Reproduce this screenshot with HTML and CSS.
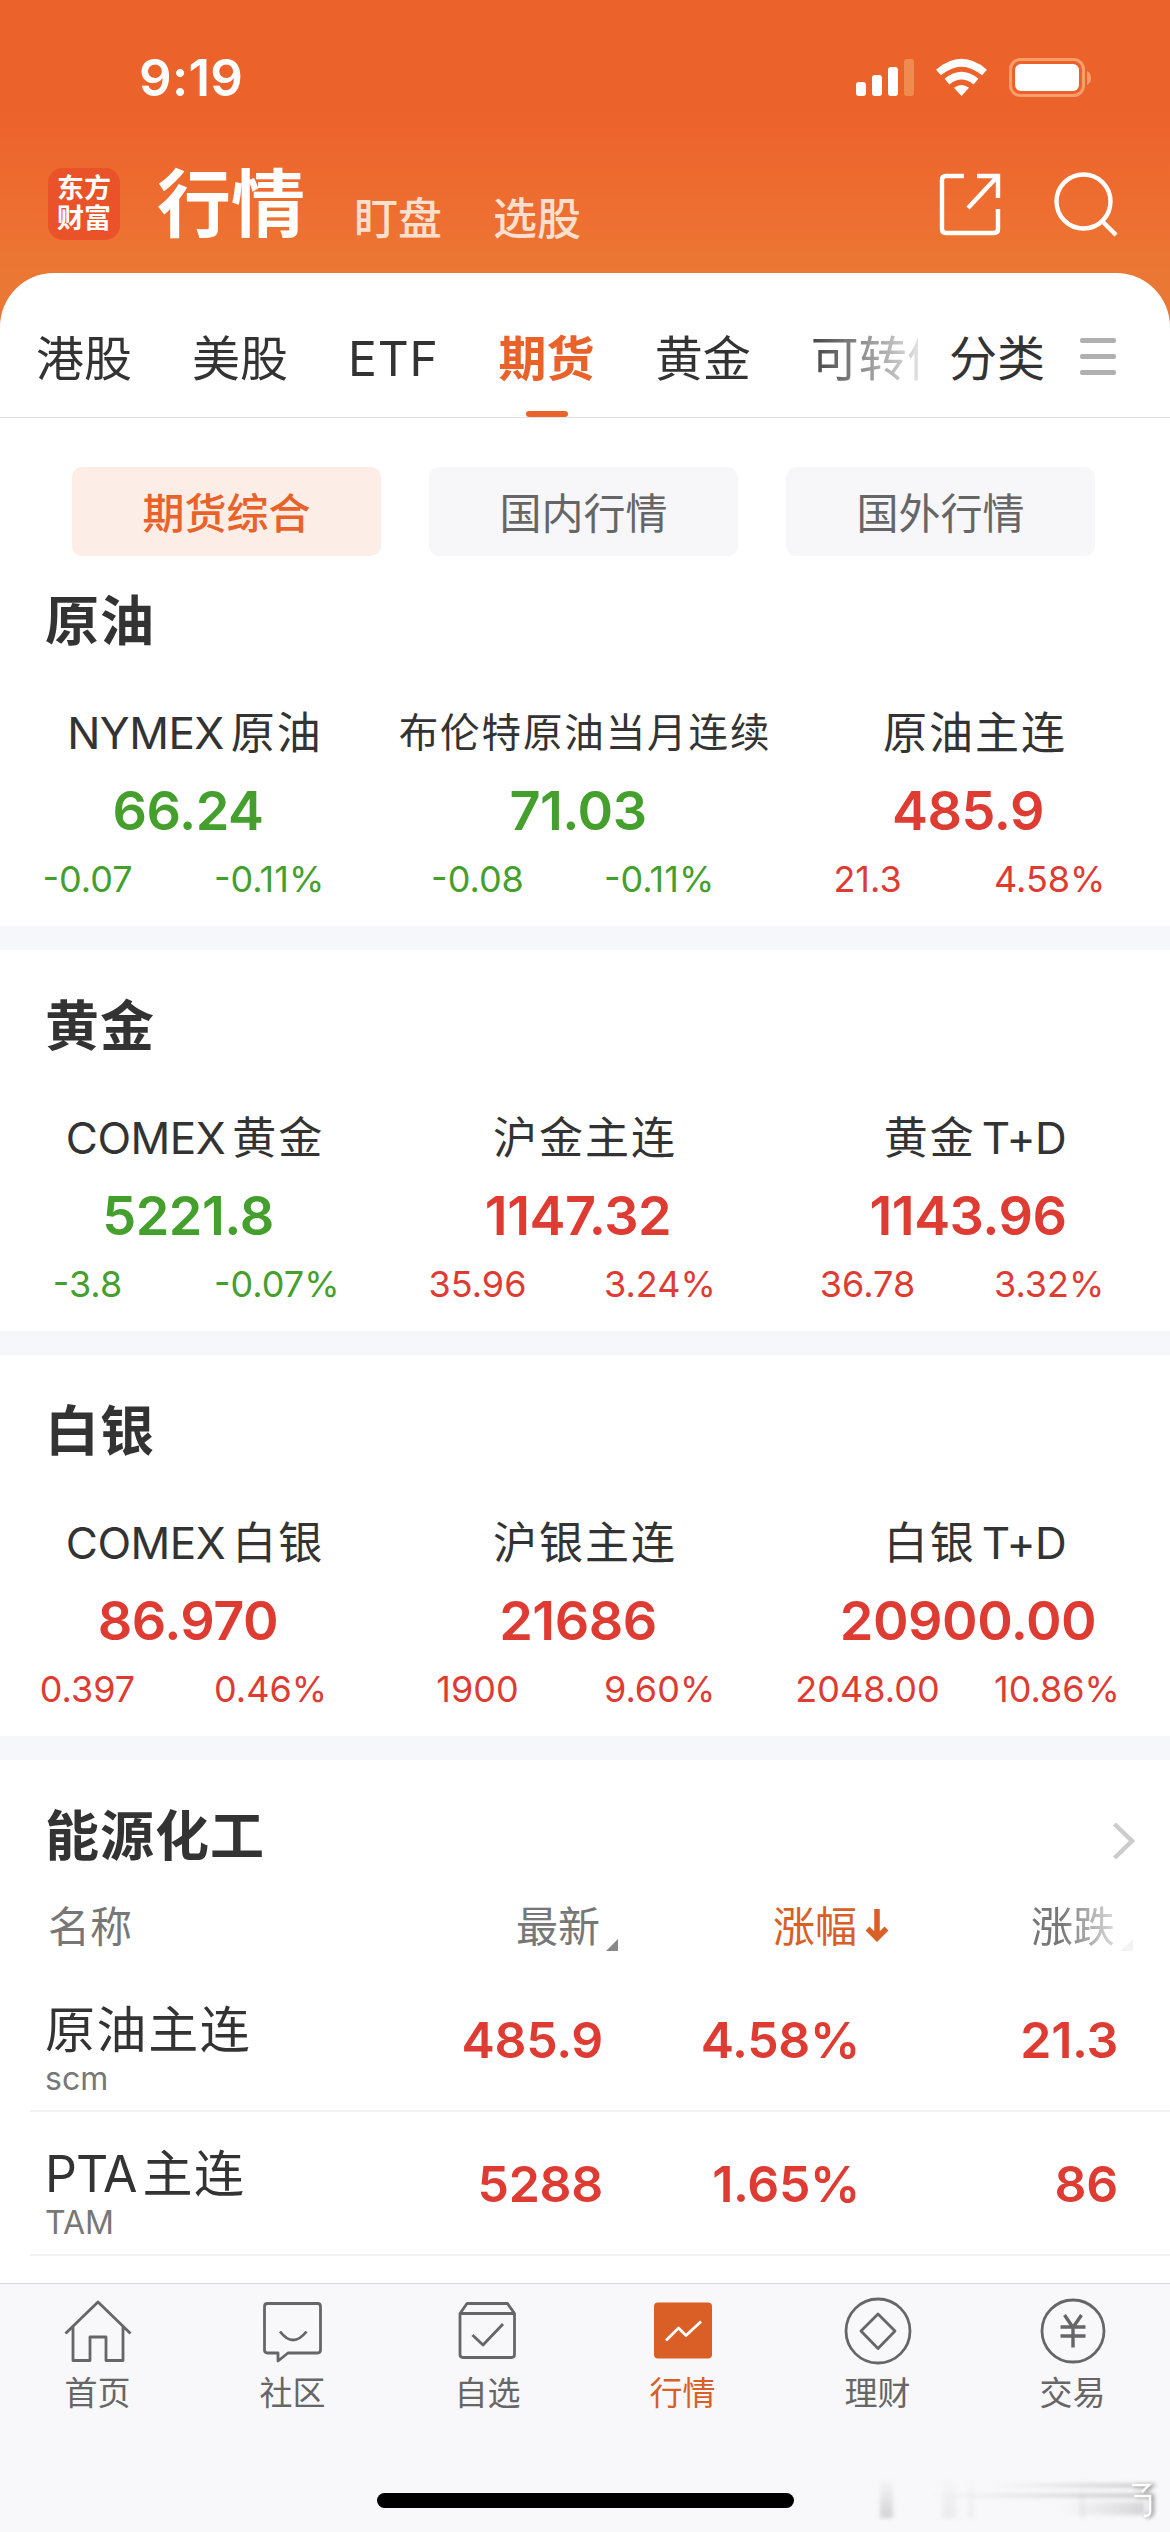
FILE: index.html
```html
<!DOCTYPE html>
<html lang="zh-CN">
<head>
    <meta charset="UTF-8">
    <meta name="viewport" content="width=device-width, initial-scale=1.0">
    <title>行情</title>
    <link rel="stylesheet" href="styles.css">
</head>
<body>
    <div class="app">
        <div class="status-bar">
            <span class="time">9:19</span>
            <svg class="status-icons" width="238" height="42" viewBox="0 0 238 42">
                <g fill="#fff">
                    <rect x="0" y="25" width="10" height="14" rx="3"/>
                    <rect x="16" y="18" width="10" height="21" rx="3"/>
                    <rect x="32" y="10" width="10" height="29" rx="3"/>
                    <rect x="48" y="2" width="10" height="37" rx="3" fill="#f08a4e"/>
                    <path d="M105.500 39l-7.500-8.200q7.500-5.600 15 0z"/>
                    <rect x="159" y="7" width="64" height="27" rx="6"/>
                </g>
                <g fill="none" stroke="#fff" stroke-width="7.500">
                    <path d="M82.500 15.500q23-19.500 46 0"/>
                    <path d="M91 24.700q14.500-12 29 0"/>
                </g>
                <rect x="154.500" y="2.500" width="73" height="36" rx="10" fill="none" stroke="#fb9e6c" stroke-width="3"/>
                <path d="M231 14q4 2 4 7t-4 7z" fill="#fb9e6c"/>
            </svg>
        </div>

        <div class="header">
            <div class="logo">东方<br>财富</div>
            <h1>行情</h1>
            <a class="head-link">盯盘</a>
            <a class="head-link">选股</a>
            <svg class="share" width="62" height="64" viewBox="0 0 62 64" fill="none" stroke="#fff" stroke-width="4.400">
                <path d="M25 4H7q-4 0-4 4v49q0 4 4 4h48q4 0 4-4V37"/>
                <path d="M38 4h21v22M58 5L29 36"/>
            </svg>
            <svg class="search" width="64" height="66" viewBox="0 0 64 66" fill="none" stroke="#fff" stroke-width="4.400">
                <circle cx="29.500" cy="30.500" r="27"/>
                <path d="M48 50l14 14"/>
            </svg>
        </div>

        <div class="sheet">
            <div class="tabs">
                <div class="tabs-scroll">
                    <a>港股</a>
                    <a>美股</a>
                    <a class="latin">ETF</a>
                    <a class="active">期货</a>
                    <a>黄金</a>
                    <a>可转债</a>
                </div>
                <a class="category">分类</a>
                <div class="menu"><i></i><i></i><i></i></div>
            </div>

            <div class="filters">
                <button class="active">期货综合</button>
                <button>国内行情</button>
                <button>国外行情</button>
            </div>

            <div class="group first">
                <h2>原油</h2>
                <div class="quotes">
                    <div class="quote down">
                        <div class="name"><span>NYMEX</span>原油</div>
                        <div class="price">66.24</div>
                        <div class="change"><span>-0.07</span><span>-0.11%</span></div>
                    </div>
                    <div class="quote down">
                        <div class="name small">布伦特原油当月连续</div>
                        <div class="price">71.03</div>
                        <div class="change"><span>-0.08</span><span>-0.11%</span></div>
                    </div>
                    <div class="quote up">
                        <div class="name">原油主连</div>
                        <div class="price">485.9</div>
                        <div class="change"><span>21.3</span><span>4.58%</span></div>
                    </div>
                </div>
            </div>

            <div class="group">
                <h2>黄金</h2>
                <div class="quotes">
                    <div class="quote down">
                        <div class="name"><span>COMEX</span>黄金</div>
                        <div class="price">5221.8</div>
                        <div class="change"><span>-3.8</span><span>-0.07%</span></div>
                    </div>
                    <div class="quote up">
                        <div class="name">沪金主连</div>
                        <div class="price">1147.32</div>
                        <div class="change"><span>35.96</span><span>3.24%</span></div>
                    </div>
                    <div class="quote up">
                        <div class="name">黄金<span class="after">T+D</span></div>
                        <div class="price">1143.96</div>
                        <div class="change"><span>36.78</span><span>3.32%</span></div>
                    </div>
                </div>
            </div>

            <div class="group">
                <h2>白银</h2>
                <div class="quotes">
                    <div class="quote up">
                        <div class="name"><span>COMEX</span>白银</div>
                        <div class="price">86.970</div>
                        <div class="change"><span>0.397</span><span>0.46%</span></div>
                    </div>
                    <div class="quote up">
                        <div class="name">沪银主连</div>
                        <div class="price">21686</div>
                        <div class="change"><span>1900</span><span>9.60%</span></div>
                    </div>
                    <div class="quote up">
                        <div class="name">白银<span class="after">T+D</span></div>
                        <div class="price">20900.00</div>
                        <div class="change"><span>2048.00</span><span>10.86%</span></div>
                    </div>
                </div>
            </div>

            <div class="board">
                <div class="board-title">
                    <h2>能源化工</h2>
                    <svg width="24" height="40" viewBox="0 0 24 40" fill="none" stroke="#ccc" stroke-width="4.500">
                        <path d="M2.500 3L20 20 2.500 37"/>
                    </svg>
                </div>
                <div class="row board-head">
                    <span>名称</span>
                    <span class="sort">最新<i class="corner"></i></span>
                    <span class="sort active">涨幅<svg width="24" height="34" viewBox="0 0 24 34" fill="none" stroke="#d95f26" stroke-width="5.500">
                        <path d="M12 1v29M2.500 20.500L12 30l9.500-9.500"/>
                    </svg></span>
                    <span class="sort fade">涨跌<i class="corner"></i></span>
                </div>
                <div class="row item">
                    <div class="item-name">原油主连<small>scm</small></div>
                    <b>485.9</b>
                    <b>4.58%</b>
                    <b>21.3</b>
                </div>
                <div class="row item">
                    <div class="item-name"><span>PTA</span>主连<small>TAM</small></div>
                    <b>5288</b>
                    <b>1.65%</b>
                    <b>86</b>
                </div>
            </div>
        </div>

        <div class="tab-bar">
            <a>
                <svg width="72" height="72" viewBox="0 0 72 72">
                    <path d="M3.500 37.500L36 6l32.500 31.500M11 31v33.500h17V41h16v23.500h17V31"/>
                </svg>
                首页
            </a>
            <a>
                <svg width="72" height="72" viewBox="0 0 72 72">
                    <path d="M10.500 7.500h50q3 0 3 3v43.500q0 3-3 3H31l-10 8v-8h-10.500q-3 0-3-3V10.500q0-3 3-3zM23 35.500q13 17 26.500 0"/>
                </svg>
                社区
            </a>
            <a>
                <svg width="72" height="72" viewBox="0 0 72 72">
                    <path d="M8 17.500l7-10h40.500l7 10V58.500q0 3-3 3H11q-3 0-3-3zM8 17.500h54.500M20.500 39l10.500 10 20-21"/>
                </svg>
                自选
            </a>
            <a class="active">
                <svg width="72" height="72" viewBox="0 0 72 72">
                    <rect x="7" y="6.500" width="58" height="56" rx="4" fill="#d95f26" stroke="none"/>
                    <path d="M19 44.500L31.500 32l7.500 7.500L54 25.500" stroke="#fff"/>
                </svg>
                行情
            </a>
            <a>
                <svg width="72" height="72" viewBox="0 0 72 72">
                    <circle cx="36" cy="35" r="32"/>
                    <path d="M36 18L53 35 36 52.500 19 35z"/>
                </svg>
                理财
            </a>
            <a>
                <svg width="72" height="72" viewBox="0 0 72 72">
                    <circle cx="36" cy="35" r="31"/>
                    <path d="M27.500 19L36 31.500 44.500 19M23.500 31h25M23.500 40h25M36 31v20.500" stroke-width="3.400"/>
                </svg>
                交易
            </a>
        </div>
        <div class="home-indicator"></div>
        <svg class="smudge" width="290" height="52" viewBox="0 0 290 52">
            <defs>
                <linearGradient id="fadeIn">
                    <stop offset="0" stop-color="#999" stop-opacity="0"/>
                    <stop offset="1" stop-color="#777" stop-opacity="0.55"/>
                </linearGradient>
                <linearGradient id="fadeDown" x2="0" y2="1">
                    <stop offset="0" stop-color="#999" stop-opacity="0"/>
                    <stop offset="1" stop-color="#999" stop-opacity="0.4"/>
                </linearGradient>
                <filter id="soft"><feGaussianBlur stdDeviation="2"/></filter>
            </defs>
            <g filter="url(#soft)">
                <rect x="10" y="4" width="13" height="40" fill="url(#fadeDown)"/>
                <rect x="72" y="4" width="14" height="40" fill="url(#fadeDown)" opacity="0.35"/>
                <rect x="98" y="4" width="6" height="40" fill="url(#fadeDown)" opacity="0.3"/>
                <rect x="210" y="4" width="5" height="40" fill="url(#fadeDown)" opacity="0.4"/>
                <rect x="120" y="10" width="155" height="3" fill="url(#fadeIn)"/>
                <rect x="60" y="20" width="210" height="3" fill="url(#fadeIn)"/>
                <rect x="190" y="28" width="85" height="13" fill="url(#fadeIn)" opacity="0.5"/>
                <path d="M264 12h17l-7 6M266 22h16v16q0 4-6 4" fill="none" stroke="#999" stroke-width="4"/>
            </g>
            <path d="M262 11h17l-7 7M264 22h16v16q0 4-6 4" fill="none" stroke="#fff" stroke-width="2.500"/>
        </svg>
    </div>
</body>
</html>
```

FILE: styles.css
```css
* {
    box-sizing: border-box;
}
body {
    margin: 0;
    background-color: #fff;
    color: #333;
    font-family: Inter, "Noto Sans CJK SC", sans-serif;
}
h1, h2 {
    margin: 0;
}
.app {
    position: relative;
    width: 1170px;
    height: 2532px;
    display: flex;
    flex-direction: column;
    overflow: hidden;
    background: linear-gradient(#ec622b 0, #ec622b 110px, #ee6e31 210px, #ea7733 273px) no-repeat;
    background-size: 100% 340px;
}

/* Status bar */
.status-bar {
    height: 132px;
    padding: 57px 76px 0 139px;
    display: flex;
    justify-content: space-between;
    color: #fff;
}
.time {
    font-size: 51px;
    font-weight: 600;
    line-height: 42px;
    letter-spacing: 0.3px;
}

/* Header */
.header {
    height: 141px;
    padding: 36px 52px 0 48px;
    display: flex;
    align-items: flex-start;
    color: #fff;
}
.logo {
    width: 72px;
    height: 72px;
    padding-top: 6px;
    border-radius: 15px;
    background-color: #ea5229;
    font-size: 27px;
    font-weight: 700;
    line-height: 30px;
    text-align: center;
}
.header h1 {
    margin-left: 37px;
    font-size: 74px;
    font-weight: 700;
    line-height: 72px;
}
.head-link {
    margin: 24px 0 0 51px;
    font-size: 44px;
    font-weight: 500;
    line-height: 54px;
    color: #fddfce;
}
.head-link:nth-of-type(1) {
    margin-left: 49px;
}
.share {
    margin: 4px 0 0 auto;
}
.search {
    margin: 3px 0 0 53px;
}

/* Content sheet */
.sheet {
    flex: 1;
    border-radius: 54px 54px 0 0;
    background-color: #fff;
    overflow: hidden;
}
.tabs {
    height: 145px;
    display: flex;
    border-bottom: 1px solid #dfe1e2;
    font-size: 48px;
    line-height: 60px;
}
.tabs-scroll {
    width: 918px;
    height: 145px;
    padding: 56px 0 0 36px;
    display: flex;
    gap: 60px;
    overflow: hidden;
    white-space: nowrap;
    -webkit-mask-image: linear-gradient(to right, #000 800px, rgba(0, 0, 0, 0.15) 918px);
    mask-image: linear-gradient(to right, #000 800px, rgba(0, 0, 0, 0.15) 918px);
}
.tabs .latin {
    letter-spacing: 0.8px;
}
.tabs .active {
    display: flex;
    flex-direction: column;
    align-items: center;
    color: #e8622a;
    font-weight: 700;
}
.tabs .active::after {
    content: "";
    width: 42px;
    height: 6px;
    margin-top: 22px;
    border-radius: 3px;
    background-color: #e8622a;
}
.category {
    padding-top: 56px;
    margin-left: 31px;
}
.menu {
    width: 36px;
    height: 37px;
    margin: 65px 0 0 35px;
    display: flex;
    flex-direction: column;
    justify-content: space-between;
}
.menu i {
    height: 5px;
    border-radius: 2px;
    background-color: #b0b0b0;
}
.filters {
    padding: 49px 75px 0 72px;
    display: flex;
    gap: 48px;
}
.filters button {
    flex: 1;
    height: 89px;
    padding: 0 0 2px;
    border: none;
    border-radius: 10px;
    background-color: #f7f7fa;
    color: #666;
    font-family: inherit;
    font-size: 42px;
}
.filters .active {
    background-color: #fceee7;
    color: #e8622a;
    font-weight: 500;
}

/* Quote groups */
.group {
    padding: 47px 0 27px;
    border-bottom: 24px solid #f6f7fa;
}
.group.first {
    padding-top: 36px;
}
h2 {
    padding-left: 45px;
    font-size: 54px;
    font-weight: 600;
    line-height: 60px;
    letter-spacing: 1px;
}
.quotes {
    margin-top: 51px;
    display: grid;
    grid-template-columns: repeat(3, 390px);
}
.name {
    font-size: 44px;
    line-height: 60px;
    letter-spacing: 2px;
    text-align: center;
    white-space: nowrap;
}
.name span {
    margin-right: 7px;
    letter-spacing: -0.5px;
}
.name .after {
    margin: 0 0 0 6px;
}
.name.small {
    font-size: 39.5px;
    letter-spacing: 1.9px;
}
.price {
    margin-top: 18px;
    padding-right: 14px;
    font-size: 54px;
    font-weight: 600;
    line-height: 60px;
    letter-spacing: -0.5px;
    text-align: center;
}
.change {
    margin-top: 18px;
    display: flex;
    font-size: 36px;
    line-height: 40px;
}
.change span:first-child {
    width: 175px;
    margin-right: 39px;
    text-align: center;
}
.up .price, .up .change {
    color: #de3b33;
}
.down .price, .down .change {
    color: #459f2d;
}

/* Board */
.board {
    padding-top: 47px;
}
.board-title {
    display: flex;
    justify-content: space-between;
    padding-right: 34px;
}
.board-title svg {
    margin-top: 14px;
}
.row {
    display: grid;
    justify-content: start;
}
.board-head {
    height: 101px;
    padding: 35px 0 0 48px;
    grid-template-columns: 468px 257px 258px 110px;
    font-size: 42px;
    line-height: 50px;
    color: #777;
}
.board-head .sort {
    display: flex;
}
.board-head .active {
    color: #d95f26;
}
.board-head .active svg {
    margin: 6px 0 0 8px;
}
.corner {
    margin: 37px 0 0 6px;
    border-bottom: 12px solid #888;
    border-left: 12px solid transparent;
    height: 0;
}
.fade {
    -webkit-mask-image: linear-gradient(to right, #000 30px, rgba(0, 0, 0, 0.1) 95px);
    mask-image: linear-gradient(to right, #000 30px, rgba(0, 0, 0, 0.1) 95px);
}
.item {
    height: 144px;
    margin-left: 30px;
    padding-left: 15px;
    grid-template-columns: 358px 200px 257px 258px;
    align-items: center;
    border-bottom: 2px solid #f3f3f4;
}
.item b {
    padding-top: 2px;
    font-size: 50px;
    font-weight: 600;
    letter-spacing: -0.3px;
    color: #de3b33;
    text-align: right;
}
.item-name {
    font-size: 50px;
    line-height: 60px;
    letter-spacing: 1.6px;
    padding-top: 20px;
}
.item-name span {
    margin-right: 6px;
    letter-spacing: -1px;
}
.item-name small {
    display: block;
    font-size: 32px;
    line-height: 38px;
    letter-spacing: 0;
    color: #777;
}

/* Bottom navigation */
.tab-bar {
    height: 249px;
    padding-top: 12px;
    display: grid;
    grid-template-columns: repeat(6, 1fr);
    align-items: start;
    border-top: 1px solid #d8d8da;
    background-color: #f8f8fa;
}
.tab-bar a {
    display: flex;
    flex-direction: column;
    align-items: center;
    gap: 3px;
    font-size: 33px;
    line-height: 44px;
    color: #666;
}
.tab-bar svg {
    fill: none;
    stroke: #666;
    stroke-width: 2.8;
    stroke-linejoin: round;
}
.tab-bar .active {
    color: #d95f26;
}
.home-indicator {
    position: absolute;
    left: 377px;
    bottom: 24px;
    width: 417px;
    height: 15px;
    border-radius: 8px;
    background-color: #000;
}
.smudge {
    position: absolute;
    right: 10px;
    bottom: 6px;
}
```
